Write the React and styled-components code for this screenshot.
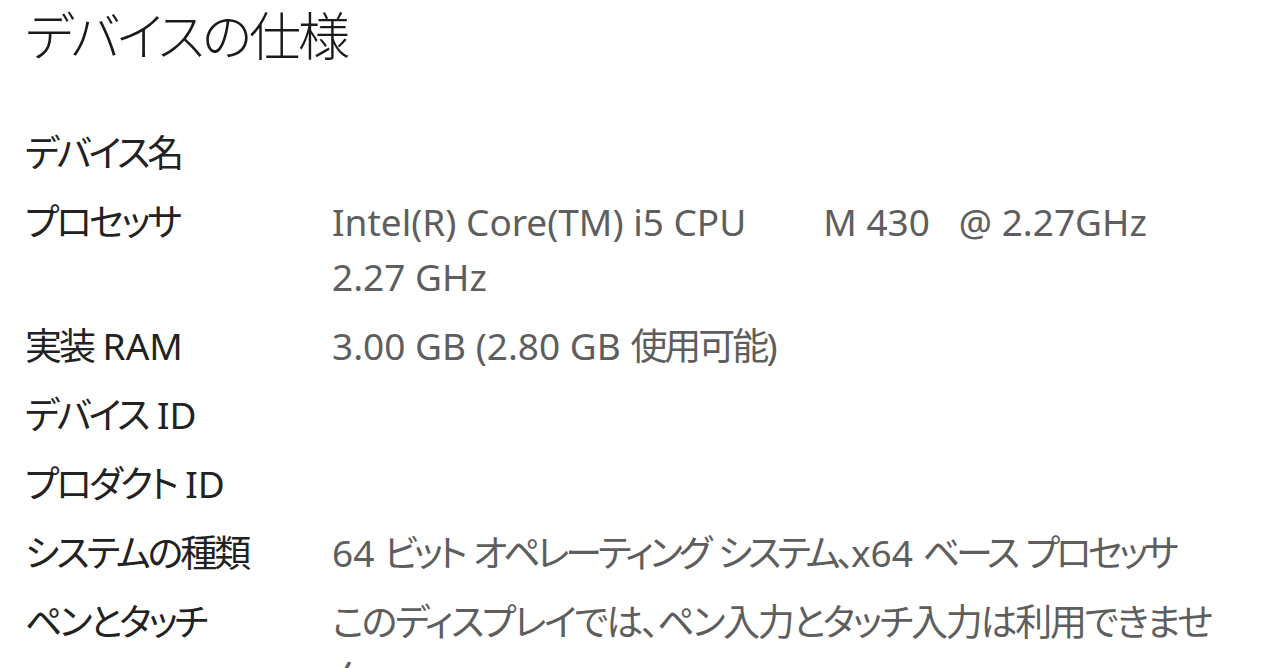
import { Fragment } from 'react';
import styled, { createGlobalStyle } from 'styled-components';

const GlobalStyle = createGlobalStyle`
  html, body {
    margin: 0;
    padding: 0;
    background: #ffffff;
    overflow: hidden;
  }
  body {
    font-family: "Noto Sans", "Noto Sans CJK JP", sans-serif;
    font-feature-settings: "palt";
  }
`;

const Page = styled.div`
  padding: 0 0 0 25px;
  width: 1255px;
  height: 668px;
  overflow: hidden;
  box-sizing: border-box;
`;

const Title = styled.h1`
  margin: 0;
  font-size: 52px;
  line-height: 68px;
  font-weight: 300;
  letter-spacing: -3px;
  color: #1a1a1a;
  font-family: "Noto Sans CJK JP", sans-serif;
  font-feature-settings: "palt";
`;

const SpecList = styled.dl`
  display: grid;
  grid-template-columns: 307px 890px;
  row-gap: 14px;
  margin: 57px 0 0;
  font-size: 37px;
  line-height: 55px;
  letter-spacing: -3px;
`;

const Label = styled.dt`
  margin: 0;
  color: #222222;
`;

const Value = styled.dd`
  margin: 0;
  color: #5e5e5e;
  white-space: pre-wrap;
  letter-spacing: ${(p) => p.$tracking || '-3px'};
`;

// latin runs keep their natural spacing, only the kana are packed tighter
const Latin = styled.span`
  letter-spacing: 0;
`;

const mixed = (text) =>
  text.split(/([\x20-\x7E]+)/).map((part, i) =>
    /[\x20-\x7E]/.test(part) ? <Latin key={i}>{part}</Latin> : part
  );

const specs = [
  { label: 'デバイス名', value: '' },
  { label: 'プロセッサ', value: 'Intel(R) Core(TM) i5 CPU        M 430   @ 2.27GHz\n2.27 GHz' },
  { label: '実装 RAM', value: '3.00 GB (2.80 GB 使用可能)' },
  { label: 'デバイス ID', value: '' },
  { label: 'プロダクト ID', value: '' },
  { label: 'システムの種類', value: '64 ビット オペレーティング システム、x64 ベース プロセッサ', tracking: '-4px' },
  { label: 'ペンとタッチ', value: 'このディスプレイでは、ペン入力とタッチ入力は利用できません', tracking: '-2.3px' },
];

export default function App() {
  return (
    <>
      <GlobalStyle />
      <Page>
        <Title>デバイスの仕様</Title>
        <SpecList>
          {specs.map((s) => (
            <Fragment key={s.label}>
              <Label>{mixed(s.label)}</Label>
              <Value $tracking={s.tracking}>{mixed(s.value)}</Value>
            </Fragment>
          ))}
        </SpecList>
      </Page>
    </>
  );
}
